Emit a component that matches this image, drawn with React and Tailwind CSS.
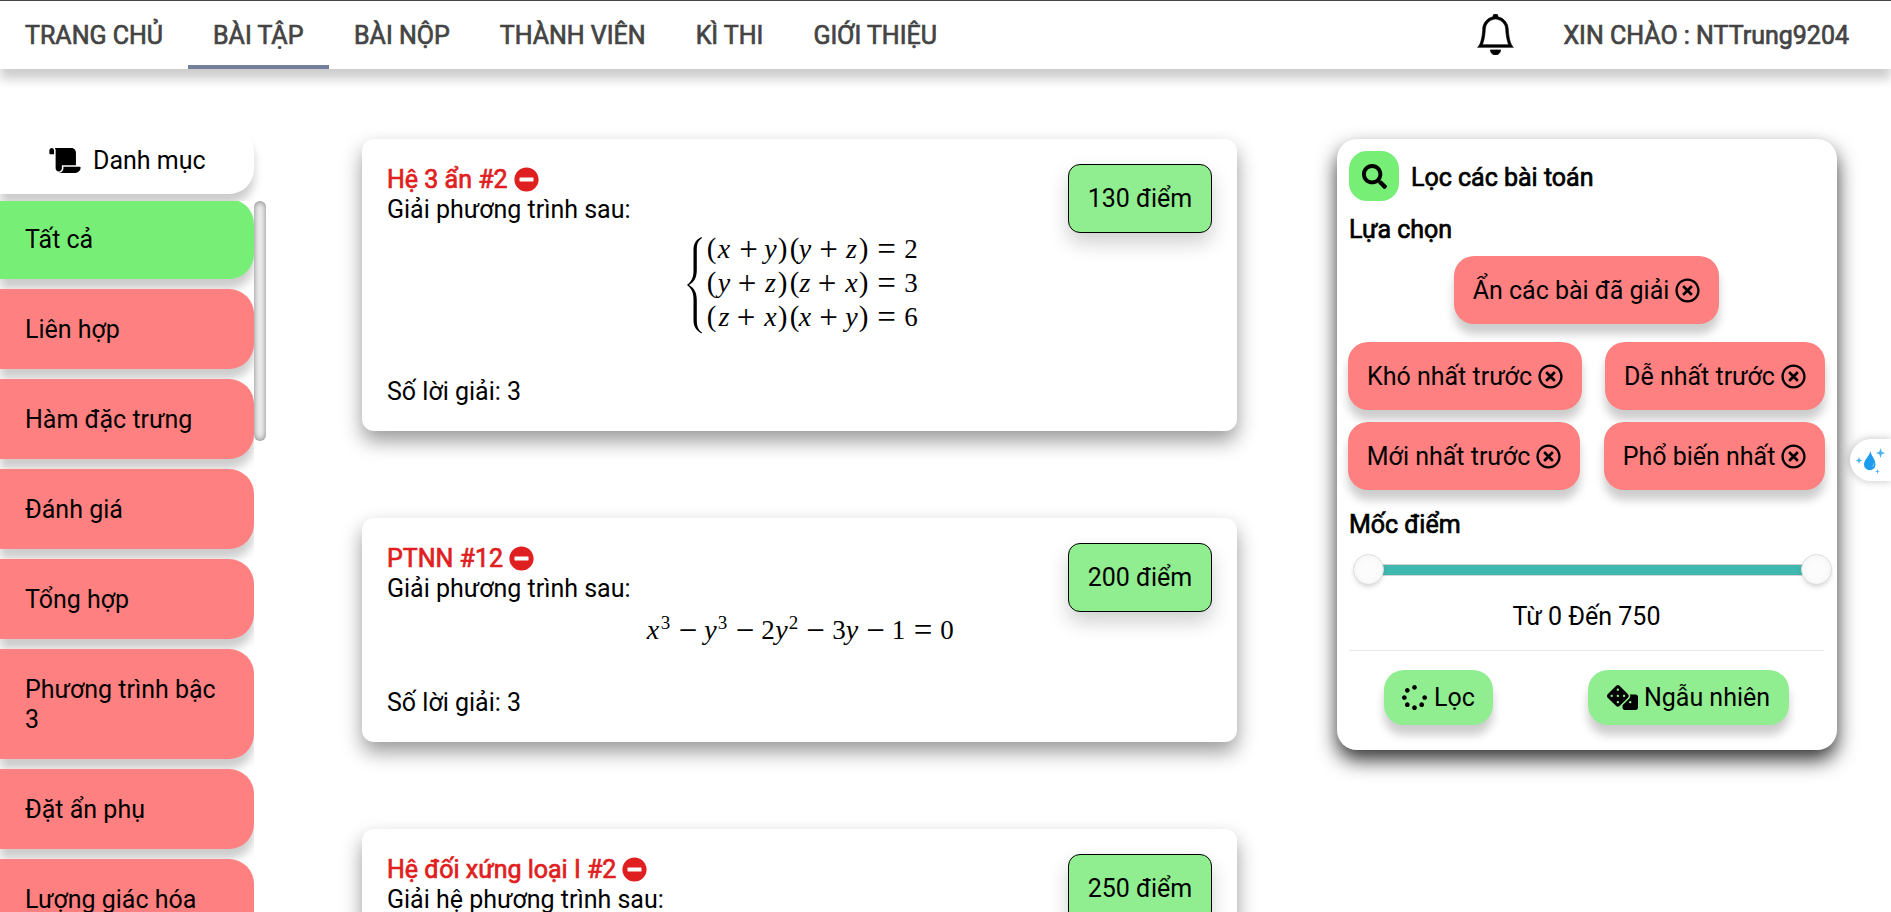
import { FaScroll, FaMinusCircle, FaRegTimesCircle, FaSpinner, FaDice, FaSearch } from "react-icons/fa";
import { BsBell } from "react-icons/bs";

const NAV = ["TRANG CHỦ", "BÀI TẬP", "BÀI NỘP", "THÀNH VIÊN", "KÌ THI", "GIỚI THIỆU"];
const CATEGORIES = [
  "Tất cả",
  "Liên hợp",
  "Hàm đặc trưng",
  "Đánh giá",
  "Tổng hợp",
  "Phương trình bậc 3",
  "Đặt ẩn phụ",
  "Lượng giác hóa",
];

function Header() {
  return (
    <header className="relative z-10 flex h-[69px] shrink-0 items-stretch border-t border-[#444] bg-white text-[#444] shadow-[0_10px_10px_rgba(0,0,0,0.2)] [-webkit-text-stroke:0.7px_#444]">
      <nav className="flex flex-1">
        {NAV.map((label) => (
          <a
            key={label}
            className={
              label === "BÀI TẬP"
                ? "w-[141px] border-b-4 border-[#757f9a] px-[25px] pt-[20px]"
                : "border-b-4 border-transparent px-[25px] pt-[20px]"
            }
          >
            {label}
          </a>
        ))}
      </nav>
      <BsBell className="mt-[13px] mr-[47px] size-[41px] text-black" strokeWidth="0.25" />
      <span className="pt-[20px] pr-[42px]">XIN CHÀO : NTTrung9204</span>
    </header>
  );
}

function Sidebar() {
  return (
    <aside className="flex w-[266px] shrink-0 flex-col pt-[57px]">
      <div className="flex h-[68px] w-[254px] shrink-0 items-center gap-[12px] rounded-r-[25px] bg-white pl-[49px] shadow-[0_10px_10px_rgba(0,0,0,0.2)]">
        <FaScroll className="h-[25px] w-[32px]" />
        <span className="pt-[2px]">Danh mục</span>
      </div>
      <div className="mt-[7px] flex min-h-0 flex-1">
        <ul className="relative w-[254px] overflow-hidden bg-white">
          {CATEGORIES.map((label) => (
            <li
              key={label}
              className={
                label === "Tất cả"
                  ? "-mt-[2px] mb-[10px] rounded-r-[25px] bg-[#77ef77] px-[25px] pt-[26px] pb-[24px] shadow-[0_10px_10px_rgba(0,0,0,0.2)]"
                  : "mb-[10px] rounded-r-[25px] bg-[#ff8080] px-[25px] pt-[26px] pb-[24px] shadow-[0_10px_10px_rgba(0,0,0,0.2)]"
              }
            >
              {label}
            </li>
          ))}
        </ul>
        <div className="h-[240px] w-[12px] rounded-[6px] bg-[#f0f0f0] shadow-[inset_0_0_6px_rgba(0,0,0,0.5)]" />
      </div>
    </aside>
  );
}

/* Glyph entries are [character, centre x, kind]: v variable, s superscript, p paren, o operator, d digit */
function Glyphs({ y, items }) {
  return items.map(([ch, x, kind], i) => {
    if (kind === "v")
      return (
        <text key={i} x={x} y={y} fontSize="28" fontStyle="italic" textAnchor="middle">
          {ch}
        </text>
      );
    if (kind === "s")
      return (
        <text key={i} x={x} y={y - 10} fontSize="19" textAnchor="middle">
          {ch}
        </text>
      );
    if (kind === "o")
      return (
        <text key={i} x={x} y={y + 2} fontSize="33" textAnchor="middle">
          {ch}
        </text>
      );
    return (
      <text key={i} x={x} y={y} fontSize={kind === "p" ? "29" : "27"} textAnchor="middle">
        {ch}
      </text>
    );
  });
}

function row(a, b, c, d, n, plus1, plus2) {
  return [
    ["(", 25.5, "p"], [a, 38, "v"], ["+", plus1, "o"], [b, 84.5, "v"], [")", 96.5, "p"],
    ["(", 108.5, "p"], [c, 119, "v"], ["+", plus2, "o"], [d, 165.5, "v"], [")", 177.5, "p"],
    ["=", 200.5, "o"], [n, 225, "d"],
  ];
}

function SystemFormula() {
  return (
    <svg width="240" height="120" className="font-['Liberation_Serif',serif]" fill="#000">
      <path d="M15.500 16C9 19 7.500 24 7.500 29V50C7.500 57 5 61 1 64C5 67 7.500 71 7.500 78V99C7.500 104 9 109 15.500 112.500L16 111.500C11.500 108.500 10.800 104 10.800 99V79C10.800 71 8 67 3 64C8 61 10.800 57 10.800 49V29C10.800 24 11.500 20 16 17Z" />
      <Glyphs y={37} items={row("x", "y", "y", "z", "2", 62.5, 142.5)} />
      <Glyphs y={71} items={row("y", "z", "z", "x", "3", 61, 141)} />
      <Glyphs y={105} items={row("z", "x", "x", "y", "6", 60, 142.5)} />
    </svg>
  );
}

function CubicFormula() {
  return (
    <svg width="320" height="50" className="font-['Liberation_Serif',serif]" fill="#000">
      <Glyphs
        y={36}
        items={[
          ["x", 14, "v"], ["3", 26.5, "s"], ["−", 49, "o"], ["y", 71.5, "v"], ["3", 83.5, "s"],
          ["−", 106, "o"], ["2", 129, "d"], ["y", 142.5, "v"], ["2", 154.5, "s"], ["−", 176.5, "o"],
          ["3", 200, "d"], ["y", 213, "v"], ["−", 236.5, "o"], ["1", 259.5, "d"], ["=", 284, "o"],
          ["0", 308, "d"],
        ]}
      />
    </svg>
  );
}

function Problem({ title, intro, points, solutions, heightClass, children }) {
  return (
    <article
      className={
        "relative flex shrink-0 flex-col rounded-[12px] bg-white px-[25px] pt-[26px] pb-[24px] shadow-[0_10px_20px_rgba(0,0,0,0.4)] " +
        heightClass
      }
    >
      <h2 className="flex items-center gap-[6px] text-[#e02020] [-webkit-text-stroke:0.7px_#e02020]">
        {title}
        <FaMinusCircle className="mb-[2px] size-[25px] [-webkit-text-stroke:0]" />
      </h2>
      <p>{intro}</p>
      {children}
      {solutions && <p className="mt-auto">Số lời giải: {solutions}</p>}
      <span className="absolute top-[25px] right-[25px] flex h-[69px] w-[144px] items-center justify-center rounded-[12px] border border-black bg-[#90ee90] pt-[1px] shadow-[0_10px_20px_rgba(0,0,0,0.19)]">
        {points} điểm
      </span>
    </article>
  );
}

function Option({ label, className = "" }) {
  return (
    <button
      className={
        "flex h-[68px] items-center justify-center gap-[6px] rounded-[20px] bg-[#ff8080] whitespace-nowrap shadow-[0_10px_10px_rgba(0,0,0,0.2)] " +
        className
      }
    >
      <span className="pt-[1px]">{label}</span>
      <FaRegTimesCircle className="size-[25px]" />
    </button>
  );
}

function FilterPanel() {
  return (
    <section className="mt-[70px] flex h-[611px] w-[500px] shrink-0 flex-col rounded-[20px] bg-white pt-[12px] pr-[12px] pl-[11px] shadow-[0_10px_20px_rgba(0,0,0,0.8)]">
      <div className="ml-[1px] flex items-center gap-[12px]">
        <span className="flex size-[50px] items-center justify-center rounded-[18px] bg-[#77ef77]">
          <FaSearch className="size-[25px]" />
        </span>
        <h3 className="pt-[4px] [-webkit-text-stroke:0.7px_#000]">Lọc các bài toán</h3>
      </div>
      <h3 className="mt-[14px] pl-[1px] [-webkit-text-stroke:0.7px_#000]">Lựa chọn</h3>
      <Option label="Ẩn các bài đã giải" className="mt-[11px] w-[265px] self-center" />
      <div className="mt-[18px] flex justify-between">
        <Option label="Khó nhất trước" className="w-[234px]" />
        <Option label="Dễ nhất trước" className="w-[220px]" />
      </div>
      <div className="mt-[12px] flex justify-between">
        <Option label="Mới nhất trước" className="w-[232px]" />
        <Option label="Phổ biến nhất" className="w-[221px]" />
      </div>
      <h3 className="mt-[20px] pl-[1px] [-webkit-text-stroke:0.7px_#000]">Mốc điểm</h3>
      <div className="mt-[14px] -mr-[7px] ml-[5px] flex items-center">
        <span className="z-10 size-[31px] shrink-0 rounded-full border border-[#ddd] bg-[#fcfcfc] shadow-[inset_0_0_8px_rgba(0,0,0,0.04),0_3px_6px_-3px_rgba(0,0,0,0.3)]" />
        <span className="-mx-[8px] h-[12px] flex-1 border-y border-[#d3d3d3] bg-[#3fb8af]" />
        <span className="z-10 size-[31px] shrink-0 rounded-full border border-[#ddd] bg-[#fcfcfc] shadow-[inset_0_0_8px_rgba(0,0,0,0.04),0_3px_6px_-3px_rgba(0,0,0,0.3)]" />
      </div>
      <p className="mt-[17px] text-center">Từ 0 Đến 750</p>
      <hr className="mx-[1px] mt-[18px] border-[#e8e8e8]" />
      <div className="mt-[19px] flex justify-between pr-[36px] pl-[36px]">
        <button className="flex h-[55px] w-[109px] items-center justify-center gap-[7px] rounded-[20px] bg-[#90ee90] shadow-[0_10px_10px_rgba(0,0,0,0.2)]">
          <FaSpinner className="size-[25px]" />
          <span>Lọc</span>
        </button>
        <button className="flex h-[55px] w-[201px] items-center justify-center gap-[6px] rounded-[20px] bg-[#90ee90] shadow-[0_10px_10px_rgba(0,0,0,0.2)]">
          <FaDice className="h-[25px] w-[31px]" />
          <span>Ngẫu nhiên</span>
        </button>
      </div>
    </section>
  );
}

function AssistantTab() {
  return (
    <div className="absolute top-[439px] right-0 flex h-[42px] w-[41px] items-center rounded-l-full bg-white shadow-[0_0_8px_rgba(0,0,0,0.25)]">
      <svg width="41" height="42" viewBox="0 0 41 42" fill="#1d9bf0">
        <path d="M20.500 12C21 17 25.500 20 25.500 25.500A5.700 5.700 0 0 1 14 25.500C14 20.500 19 18 20.500 12Z" />
        <path d="M24 23.500A3.500 3.500 0 0 1 21.500 28A5 5 0 0 0 24 23.500Z" fill="#fff" />
        <path d="M30.500 9L31.700 12.800L35 14L31.700 15.200L30.500 19L29.300 15.200L26 14L29.300 12.800Z" fill="#4bb4f5" />
        <path d="M9 18L9.900 20.600L12.500 21.500L9.900 22.400L9 25L8.100 22.400L5.500 21.500L8.100 20.600Z" fill="#4bb4f5" />
        <path d="M27.500 30L28.100 31.900L30 32.500L28.100 33.100L27.500 35L26.900 33.100L25 32.500L26.900 31.900Z" fill="#4bb4f5" />
      </svg>
    </div>
  );
}

export default function App() {
  return (
    <div className="relative flex h-screen flex-col overflow-hidden bg-white font-[Roboto,sans-serif] text-[25px] leading-[30px] text-black">
      <Header />
      <div className="flex min-h-0 flex-1">
        <Sidebar />
        <main className="mr-[100px] ml-[96px] flex w-[875px] shrink-0 flex-col pt-[70px]">
          <Problem title="Hệ 3 ẩn #2" intro="Giải phương trình sau:" points={130} solutions={3} heightClass="h-[292px] mb-[87px]">
            <div className="-mt-[4px] ml-[299px] h-[110px]">
              <SystemFormula />
            </div>
          </Problem>
          <Problem title="PTNN #12" intro="Giải phương trình sau:" points={200} solutions={3} heightClass="h-[224px] mb-[87px]">
            <div className="-mt-[1px] ml-[252px] h-[50px]">
              <CubicFormula />
            </div>
          </Problem>
          <Problem title="Hệ đối xứng loại I #2" intro="Giải hệ phương trình sau:" points={250} heightClass="h-[292px]" />
        </main>
        <FilterPanel />
      </div>
      <AssistantTab />
    </div>
  );
}
